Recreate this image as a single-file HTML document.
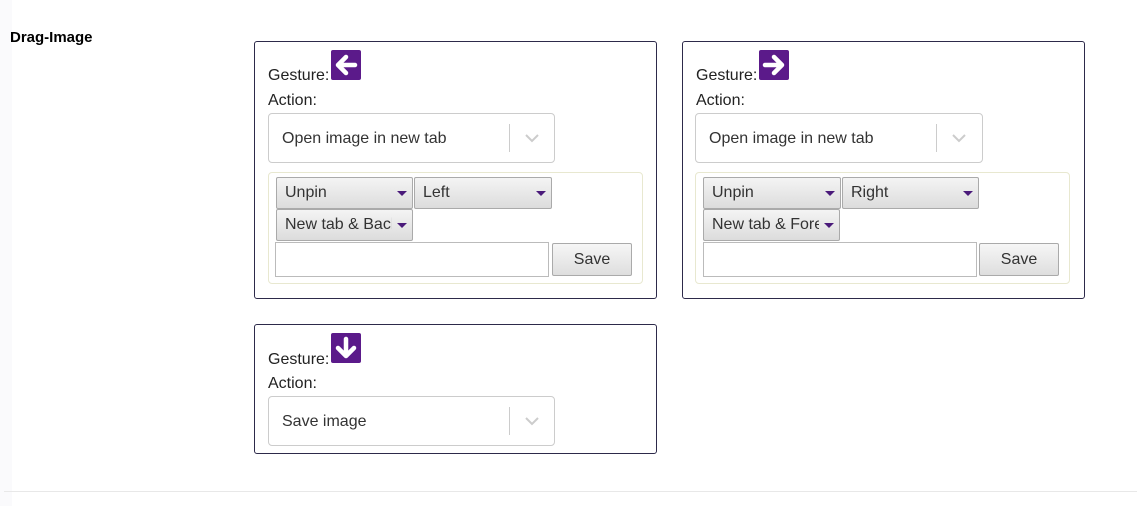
<!DOCTYPE html>
<html><head><style>
body{margin:0;width:1137px;height:506px;background:#fff;position:relative;overflow:hidden;font-family:"Liberation Sans",Arial,sans-serif;color:#222}
.strip{position:absolute;left:0;top:0;width:12px;height:506px;background:#fafafc}
.hr{position:absolute;left:4px;right:0;top:491px;height:1px;background:#e8e8e8}
.title{position:absolute;left:10px;top:29px;font-weight:bold;font-size:15px;color:#000}
.card{position:absolute;border:1px solid #2d2a4a;border-radius:3px;background:#fff}
.a{position:absolute;font-size:16px;color:#222}
.ic{position:absolute;width:30px;height:30px;background:#5b1a8a;border-radius:2px}
.sel{position:absolute;width:285px;height:48px;border:1px solid #ccc;border-radius:4px;font-size:16px;color:#333}
.sel span{position:absolute;left:13px;top:16px}
.sel i{position:absolute;left:240px;top:10px;width:1px;height:28px;background:#ccc}
.sel svg{position:absolute;left:256px;top:19px}
.fs{position:absolute;width:373px;height:110px;border:1px solid #e8e8d0;border-radius:4px}
.dd{position:absolute;height:32px;border:1px solid #aaa;border-radius:2px;background:linear-gradient(#f4f4f4,#dcdcdc);font-size:16px;color:#333;box-sizing:border-box;overflow:hidden;white-space:nowrap}
.dd span{position:absolute;left:8px;top:6px;width:107px;overflow:hidden}
.dd b{position:absolute;right:0;top:0;bottom:0;width:20px}
.dd b:after{content:"";position:absolute;right:5px;top:13px;border-left:5px solid transparent;border-right:5px solid transparent;border-top:5px solid #4a1a7a}
.in{position:absolute;border:1px solid #bbb;height:35px;width:274px;box-sizing:border-box;background:#fff}
.btn{position:absolute;width:80px;height:33px;border:1px solid #aaa;border-radius:2px;box-sizing:border-box;background:linear-gradient(#f6f6f6,#dedede);font-size:16px;text-align:center;line-height:31px;color:#333}
</style></head><body>
<div class="strip"></div><div class="hr"></div>
<div class="title">Drag-Image</div>

<div class="card" style="left:254px;top:41px;width:401px;height:256px"></div>
<div class="a" style="left:268px;top:67px">Gesture:</div>
<div class="ic" style="left:331px;top:50px"><svg width="30" height="30" viewBox="0 0 30 30"><path d="M24 15H8M15 7L7 15L15 23" stroke="#fff" stroke-width="4.5" fill="none" stroke-linecap="round" stroke-linejoin="round"/></svg></div>
<div class="a" style="left:268px;top:92px">Action:</div>
<div class="sel" style="left:268px;top:113px"><span>Open image in new tab</span><i></i><svg width="14" height="10"><path d="M1 2L7 8L13 2" stroke="#ccc" stroke-width="2" fill="none"/></svg></div>
<div class="fs" style="left:268px;top:172px"></div>
<div class="dd" style="left:276px;top:177px;width:137px"><span>Unpin</span><b></b></div>
<div class="dd" style="left:414px;top:177px;width:138px"><span>Left</span><b></b></div>
<div class="dd" style="left:276px;top:209px;width:137px"><span>New tab &amp; Background</span><b></b></div>
<div class="in" style="left:275px;top:242px"></div>
<div class="btn" style="left:552px;top:243px">Save</div>

<div class="card" style="left:682px;top:41px;width:401px;height:256px"></div>
<div class="a" style="left:696px;top:67px">Gesture:</div>
<div class="ic" style="left:759px;top:50px"><svg width="30" height="30" viewBox="0 0 30 30"><path d="M6 15H22M15 7L23 15L15 23" stroke="#fff" stroke-width="4.5" fill="none" stroke-linecap="round" stroke-linejoin="round"/></svg></div>
<div class="a" style="left:696px;top:92px">Action:</div>
<div class="sel" style="left:695px;top:113px;width:286px"><span>Open image in new tab</span><i></i><svg width="14" height="10"><path d="M1 2L7 8L13 2" stroke="#ccc" stroke-width="2" fill="none"/></svg></div>
<div class="fs" style="left:695px;top:172px"></div>
<div class="dd" style="left:703px;top:177px;width:138px"><span>Unpin</span><b></b></div>
<div class="dd" style="left:842px;top:177px;width:137px"><span>Right</span><b></b></div>
<div class="dd" style="left:703px;top:209px;width:137px"><span>New tab &amp; Foreground</span><b></b></div>
<div class="in" style="left:703px;top:242px"></div>
<div class="btn" style="left:979px;top:243px">Save</div>

<div class="card" style="left:254px;top:324px;width:401px;height:128px"></div>
<div class="a" style="left:268px;top:351px">Gesture:</div>
<div class="ic" style="left:331px;top:333px"><svg width="30" height="30" viewBox="0 0 30 30"><path d="M15 6V22M7 15L15 23L23 15" stroke="#fff" stroke-width="4.5" fill="none" stroke-linecap="round" stroke-linejoin="round"/></svg></div>
<div class="a" style="left:268px;top:375px">Action:</div>
<div class="sel" style="left:268px;top:396px"><span>Save image</span><i></i><svg width="14" height="10"><path d="M1 2L7 8L13 2" stroke="#ccc" stroke-width="2" fill="none"/></svg></div>
</body></html>
